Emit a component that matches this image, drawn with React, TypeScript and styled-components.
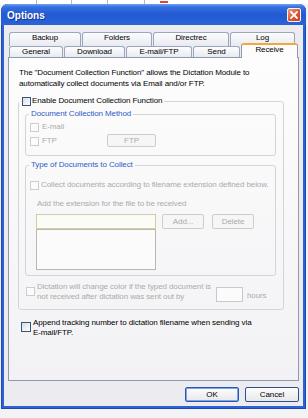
import styled, { createGlobalStyle } from "styled-components";

const GlobalStyle = createGlobalStyle`
  * { box-sizing: border-box; }
  html, body { margin: 0; padding: 0; background: #f3f3f5; }
  body {
    font-family: "Liberation Sans", Arial, sans-serif;
    font-size: 8px;
    letter-spacing: -0.1px;
    color: #000;
  }
`;

const Screen = styled.div`
  width: 308px;
  height: 418px;
  overflow: hidden;
  background: #f3f3f5;
`;

const BackStrip = styled.div`
  height: 4px;
  display: flex;
  background: #fff;
`;

const BackCell = styled.div<{ $w: number }>`
  width: ${(p) => p.$w}px;
  border-right: 1px solid #b8b8b8;
`;

const BackMark = styled.div`
  width: 8px;
  height: 3px;
  margin-left: 15px;
  border-bottom: 2px solid #e0463c;
`;

const Window = styled.div`
  width: 305px;
  height: 405px;
  margin-left: 1px;
  display: flex;
  flex-direction: column;
  padding: 0 3px 3px;
  border-radius: 7px 7px 0 0;
  background: #2d62d6;
  box-shadow: inset 1px 0 #1d47b3, inset -1px 0 #1d47b3, inset 0 -1px #1d47b3;
`;

const TitleBar = styled.div`
  height: 21px;
  margin: 0 -3px;
  padding: 0 4px 0 6px;
  display: flex;
  align-items: center;
  justify-content: space-between;
  border-radius: 7px 7px 0 0;
  background: linear-gradient(#6fa0f2 0%, #3470e2 14%, #2459d2 50%, #2660d8 85%, #2b63d6 100%);
`;

const Title = styled.span`
  margin-top: 2px;
  font-size: 10px;
  font-weight: bold;
  letter-spacing: 0;
  color: #fff;
  text-shadow: 1px 1px 0 #14348e;
`;

const CloseButton = styled.span`
  width: 14px;
  height: 14px;
  margin-right: 1px;
  display: flex;
  align-items: center;
  justify-content: center;
  border: 1px solid #f4f4f4;
  border-radius: 2px;
  background: linear-gradient(135deg, #f39c7c, #de5329 55%, #c8421c);
`;

const Body = styled.div`
  flex: 1;
  display: flex;
  flex-direction: column;
  padding: 7px 4px 0 4px;
  background: #ecebef;
`;

const TabStrip = styled.div`
  display: flex;
  flex-direction: column;
  padding-left: 1px;
`;

const TabRow = styled.div<{ $h: number }>`
  height: ${(p) => p.$h}px;
  display: flex;
  align-items: flex-end;
  gap: 1px;
`;

const Tab = styled.div<{ $w: number; $active?: boolean }>`
  width: ${(p) => p.$w}px;
  height: ${(p) => (p.$active ? "15px" : "100%")};
  display: flex;
  justify-content: center;
  line-height: 10px;
  border: 1px solid #9aa6ba;
  border-bottom: none;
  border-radius: 3px 3px 0 0;
  background: linear-gradient(#fdfdfe, #e7eaf1);
  ${(p) =>
    p.$active &&
    `
    position: relative;
    z-index: 1;
    margin-bottom: -1px;
    border-color: #8e9aae;
    border-top: 2px solid #f2a93a;
    background: #fcfcfd;
  `}
`;

const Panel = styled.div`
  height: 324px;
  display: flex;
  flex-direction: column;
  border: 1px solid #8e9aae;
  background: linear-gradient(#fdfdfe, #f2f2f4);
`;

const Intro = styled.div`
  padding: 9px 10px 0;
  line-height: 11px;
  white-space: nowrap;
`;

const Group = styled.fieldset<{ $outer?: boolean; $mt?: number }>`
  min-width: 0;
  margin: ${(p) => (p.$outer ? "7px 0 0 9px" : `${p.$mt ?? 0}px 7px 0 6px`)};
  width: ${(p) => (p.$outer ? "266px" : "auto")};
  padding: 0 0 ${(p) => (p.$outer ? "7px" : "0")};
  border: 1px solid #d4d4d8;
  border-radius: 3px;
`;

const Legend = styled.legend<{ $blue?: boolean }>`
  display: flex;
  align-items: center;
  height: 10px;
  line-height: 10px;
  margin-left: ${(p) => (p.$blue ? "3px" : "0")};
  padding: ${(p) => (p.$blue ? "0 2px" : "0 2px 0 3px")};
  color: ${(p) => (p.$blue ? "#2f5cc6" : "#000")};
`;

const GroupBody = styled.div<{ $top: number; $bottom: number }>`
  display: flex;
  flex-direction: column;
  padding: ${(p) => p.$top}px 0 ${(p) => p.$bottom}px 4px;
`;

const CheckLine = styled.label<{ $disabled?: boolean; $gap?: number; $w?: number }>`
  display: flex;
  align-items: center;
  gap: ${(p) => p.$gap ?? 3}px;
  height: 10px;
  line-height: 10px;
  white-space: nowrap;
  width: ${(p) => (p.$w ? `${p.$w}px` : "auto")};
  color: ${(p) => (p.$disabled ? "#ababab" : "#000")};
`;

const Box = styled.span<{ $disabled?: boolean; $size?: number; $mt?: number }>`
  flex: none;
  width: ${(p) => p.$size ?? 9}px;
  height: ${(p) => p.$size ?? 9}px;
  margin-top: ${(p) => p.$mt ?? 0}px;
  border: 1px solid ${(p) => (p.$disabled ? "#cfcdc6" : "#34558a")};
  background: ${(p) => (p.$disabled ? "#fbfbfb" : "linear-gradient(135deg, #dcdcd8, #ffffff)")};
`;

const Row = styled.div<{ $mt?: number }>`
  display: flex;
  align-items: center;
  margin-top: ${(p) => p.$mt ?? 0}px;
`;

const Button = styled.button<{ $w: number; $h?: number; $disabled?: boolean; $default?: boolean }>`
  width: ${(p) => p.$w}px;
  height: ${(p) => p.$h ?? 15}px;
  padding: 0;
  font: inherit;
  letter-spacing: -0.1px;
  border-radius: 2px;
  border: 1px solid ${(p) => (p.$disabled ? "#cdcdcf" : "#2f4f86")};
  color: ${(p) => (p.$disabled ? "#ababab" : "#000")};
  background: ${(p) => (p.$disabled ? "#f6f6f7" : "linear-gradient(#fdfdfd, #e8e8ec)")};
  ${(p) => p.$default && "box-shadow: inset 0 0 0 1px #7ea3e8; border-color: #2a58b0;"}
`;

const Hint = styled.div`
  margin: 9px 0 0 7px;
  line-height: 10px;
  color: #ababab;
`;

const ExtRow = styled.div`
  display: flex;
  gap: 6px;
  margin-top: 5px;
  padding-left: 6px;
`;

const ExtColumn = styled.div`
  width: 120px;
  display: flex;
  flex-direction: column;
`;

const ExtInput = styled.div`
  height: 15px;
  border: 1px solid #d3cca6;
  background: #fbfbf8;
`;

const ExtList = styled.div`
  height: 41px;
  border: 1px solid #bdb9aa;
  background: #fbfbfb;
`;

const ExtButtons = styled.div`
  display: flex;
  gap: 8px;
`;

const Dictation = styled.div`
  display: flex;
  align-items: flex-start;
  margin: 6px 0 0 7px;
  color: #ababab;
`;

const DictText = styled.div`
  width: 177px;
  margin-left: 2px;
  line-height: 10px;
  white-space: nowrap;
`;

const HoursInput = styled.div`
  width: 27px;
  height: 15px;
  margin: 5px 0 0 2px;
  border: 1px solid #c9c9cc;
  background: #fbfbfb;
`;

const Hours = styled.span`
  margin: 9px 0 0 4px;
  line-height: 10px;
`;

const Append = styled.div`
  display: flex;
  align-items: flex-start;
  margin: 8px 0 0 12px;
`;

const AppendText = styled.div`
  margin-left: 2px;
  line-height: 10px;
  white-space: nowrap;
`;

const Footer = styled.div`
  display: flex;
  justify-content: flex-end;
  gap: 6px;
  margin-top: 6px;
`;

const backTabs: [string, number][] = [
  ["Backup", 72],
  ["Folders", 70],
  ["Directrec", 76],
  ["Log", 65],
];

const frontTabs: [string, number][] = [
  ["General", 54],
  ["Download", 61],
  ["E-mail/FTP", 66],
  ["Send", 47],
  ["Receive", 57],
];

export default function App() {
  return (
    <Screen>
      <GlobalStyle />
      <BackStrip>
        <BackCell $w={37} />
        <BackCell $w={35} />
        <BackCell $w={36} />
        <BackCell $w={37} />
        <BackMark />
      </BackStrip>
      <Window>
        <TitleBar>
          <Title>Options</Title>
          <CloseButton>
            <svg width="8" height="8" viewBox="0 0 8 8">
              <path d="M1 1 L7 7 M7 1 L1 7" stroke="#fff" strokeWidth="1.8" strokeLinecap="square" />
            </svg>
          </CloseButton>
        </TitleBar>
        <Body>
          <TabStrip>
            <TabRow $h={14}>
              {backTabs.map(([label, w]) => (
                <Tab key={label} $w={w}>
                  {label}
                </Tab>
              ))}
            </TabRow>
            <TabRow $h={11}>
              {frontTabs.map(([label, w]) => (
                <Tab key={label} $w={w} $active={label === "Receive"}>
                  {label}
                </Tab>
              ))}
            </TabRow>
          </TabStrip>
          <Panel>
            <Intro>
              The "Document Collection Function" allows the Dictation Module to
              <br />
              automatically collect documents via Email and/or FTP.
            </Intro>
            <Group $outer>
              <Legend>
                <CheckLine $gap={1}>
                  <Box />
                  Enable Document Collection Function
                </CheckLine>
              </Legend>
              <Group $mt={3}>
                <Legend $blue>Document Collection Method</Legend>
                <GroupBody $top={3} $bottom={8}>
                  <CheckLine $disabled>
                    <Box $disabled />
                    E-mail
                  </CheckLine>
                  <Row $mt={2}>
                    <CheckLine $disabled $w={77}>
                      <Box $disabled $mt={2} />
                      FTP
                    </CheckLine>
                    <Button $w={49} $h={13} $disabled>
                      FTP
                    </Button>
                  </Row>
                </GroupBody>
              </Group>
              <Group $mt={4}>
                <Legend $blue>Type of Documents to Collect</Legend>
                <GroupBody $top={10} $bottom={5}>
                  <CheckLine $disabled $gap={2}>
                    <Box $disabled />
                    Collect documents according to filename extension defined below.
                  </CheckLine>
                  <Hint>Add the extension for the file to be received</Hint>
                  <ExtRow>
                    <ExtColumn>
                      <ExtInput />
                      <ExtList />
                    </ExtColumn>
                    <ExtButtons>
                      <Button $w={42} $disabled>
                        Add...
                      </Button>
                      <Button $w={42} $disabled>
                        Delete
                      </Button>
                    </ExtButtons>
                  </ExtRow>
                </GroupBody>
              </Group>
              <Dictation>
                <Box $disabled $mt={5} />
                <DictText>
                  Dictation will change color if the typed document is
                  <br />
                  not received after dictation was sent out by
                </DictText>
                <HoursInput />
                <Hours>hours</Hours>
              </Dictation>
            </Group>
            <Append>
              <Box $size={10} $mt={4} />
              <AppendText>
                Append tracking number to dictation filename when sending via
                <br />
                E-mail/FTP.
              </AppendText>
            </Append>
          </Panel>
          <Footer>
            <Button $w={54} $default>
              OK
            </Button>
            <Button $w={54}>Cancel</Button>
          </Footer>
        </Body>
      </Window>
    </Screen>
  );
}
